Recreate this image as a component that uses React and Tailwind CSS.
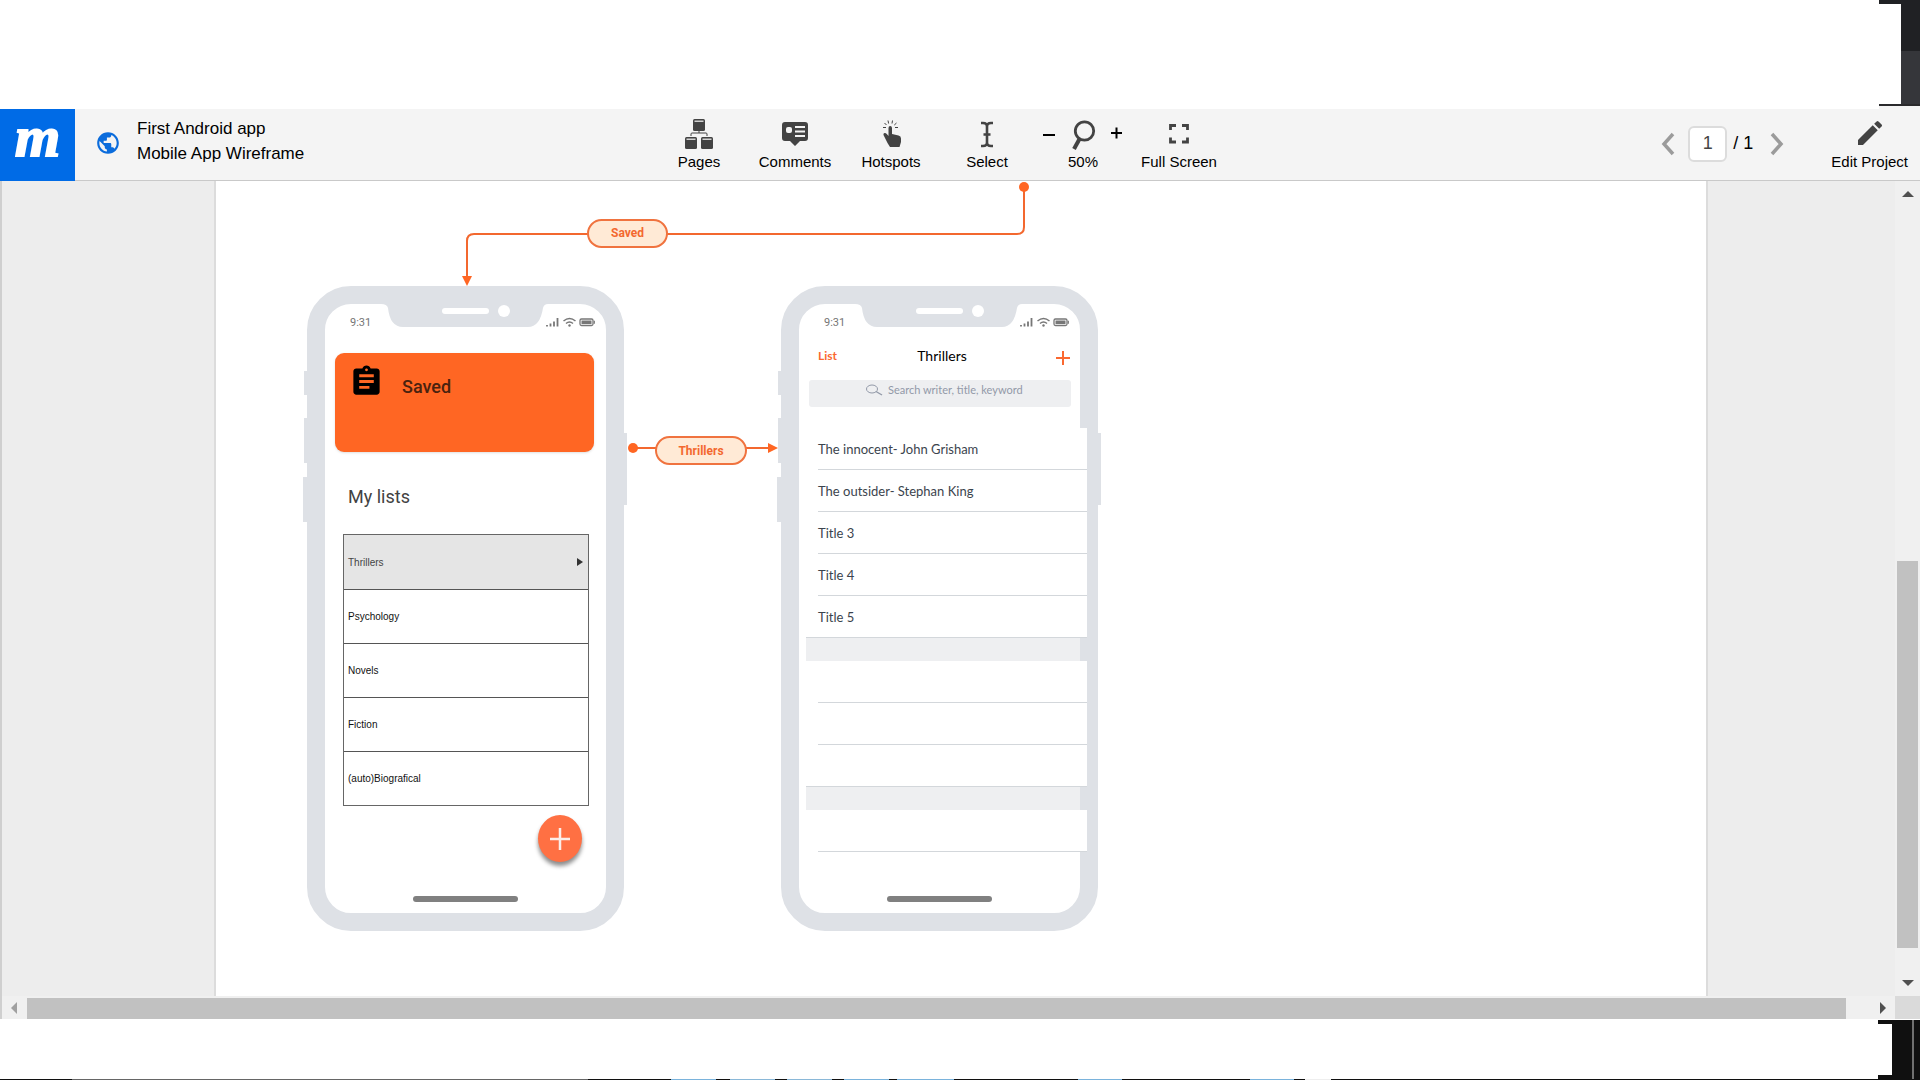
import React from "react";
import { MdAssignment, MdPublic, MdEdit } from "react-icons/md";

const INK = "#434343";

function PagesIcon() {
  const box = (x, y) => (
    <g>
      <rect x={x} y={y} width="12" height="12" rx="1.5" fill={INK} />
      <rect x={x + 1.5} y={y + 1.6} width="9" height="1.2" fill="#f4f4f4" />
    </g>
  );
  return (
    <svg width="30" height="32" viewBox="0 0 30 32" aria-hidden="true">
      {box(9, 1)}
      {box(1, 19)}
      {box(17, 19)}
      <path d="M7 18v-2q0-1 1-1h14q1 0 1 1v2M15 13v2" fill="none" stroke={INK} strokeWidth="1" />
    </svg>
  );
}

function CommentsIcon() {
  return (
    <svg width="28" height="32" viewBox="0 0 28 32" aria-hidden="true">
      <path d="M4 4h20a3 3 0 0 1 3 3v13a3 3 0 0 1-3 3h-5l-5 5-5-5H4a3 3 0 0 1-3-3V7a3 3 0 0 1 3-3z" fill={INK} />
      <rect x="5" y="9" width="6" height="6" rx="2" fill="#f4f4f4" />
      <path d="M14 9H24M14 13.500H24M14 18H24" stroke="#f4f4f4" strokeWidth="1.800" />
    </svg>
  );
}

function HotspotsIcon() {
  return (
    <svg width="28" height="32" viewBox="0 0 28 32" aria-hidden="true">
      <path
        d="M11.500 10q0-2 1.700-2t1.800 2v6l6.500 1.500q2.500.6 2.500 3v3.500L22.500 29h-9.500l-2.500-4-4-8q-.5-1.600 1-2 1.300-.2 2.500 1.200l1.500 1.800z"
        fill={INK}
      />
      <path d="M6 9.500h3M7.500 5l2 2M11 2.500l.6 3M15.500 2.500 15 5.500M19.500 5l-2.200 2M21 9.500h-3" stroke={INK} strokeWidth="1" />
    </svg>
  );
}

function SelectIcon() {
  return (
    <svg width="20" height="32" viewBox="0 0 20 32" aria-hidden="true">
      <path
        d="M4 5h2q4 0 4 3.500v16Q10 28 6 28H4M16 5h-2q-4 0-4 3.500M16 28h-2q-4 0-4-3.500M6.500 16.500h7"
        fill="none"
        stroke={INK}
        strokeWidth="2.600"
      />
    </svg>
  );
}

function ZoomIcon() {
  return (
    <svg width="28" height="34" viewBox="0 0 28 34" aria-hidden="true">
      <circle cx="15.500" cy="14" r="9.200" fill="none" stroke={INK} strokeWidth="2.800" />
      <path d="M10.500 22 5 32" stroke={INK} strokeWidth="4" />
    </svg>
  );
}

function FullScreenIcon() {
  return (
    <svg width="22" height="32" viewBox="0 0 22 32" aria-hidden="true">
      <path
        d="M2.500 12V7.500H8M14 7.500h5.500V12M19.500 19.500V24H14M8 24H2.500v-4.500"
        fill="none"
        stroke={INK}
        strokeWidth="2.800"
      />
    </svg>
  );
}

function Tool({ icon, label }) {
  return (
    <button type="button" className="flex flex-col items-center">
      <span className="flex h-9 items-center">{icon}</span>
      <span className="text-[15px] leading-5">{label}</span>
    </button>
  );
}

function Chevron({ points }) {
  return (
    <svg width="16" height="24" viewBox="0 0 16 24" aria-hidden="true">
      <polyline points={points} fill="none" stroke="#9b9b9b" strokeWidth="3.500" />
    </svg>
  );
}

function Header() {
  return (
    <header className="flex h-[72px] bg-[#f4f4f4] text-black">
      <a
        href="#home"
        aria-label="Home"
        className="flex w-[75px] items-center justify-center bg-[#006be6] pb-4 font-['Liberation_Serif',serif] text-[58px] leading-none font-bold text-white italic [-webkit-text-stroke:2px_white]"
      >
        m
      </a>
      <div className="flex flex-1 border-b border-[#c9c9c9]">
        <div className="flex flex-1 items-center pb-[3px]">
          <MdPublic className="ml-5 size-[26px] text-[#0b6cdc]" />
          <div className="ml-4 pb-1 text-[17px] leading-[25px] whitespace-nowrap">
            <h1>First Android app</h1>
            <p>Mobile App Wireframe</p>
          </div>
        </div>
        <nav className="mr-[105px] grid grid-cols-[repeat(6,96px)] pt-[7px]">
          <Tool icon={<PagesIcon />} label="Pages" />
          <Tool icon={<CommentsIcon />} label="Comments" />
          <Tool icon={<HotspotsIcon />} label="Hotspots" />
          <Tool icon={<SelectIcon />} label="Select" />
          <div className="flex flex-col items-center">
            <div className="flex h-9 items-center gap-3">
              <button type="button" aria-label="Zoom out" className="h-7 w-4">
                <svg width="16" height="16" viewBox="0 0 16 16">
                  <path d="M2 9h12" stroke="#000" strokeWidth="2" />
                </svg>
              </button>
              <ZoomIcon />
              <button type="button" aria-label="Zoom in" className="h-7 w-4">
                <svg width="16" height="16" viewBox="0 0 16 16">
                  <path d="M2 7h11M7.500 1.500v11" stroke="#000" strokeWidth="2" />
                </svg>
              </button>
            </div>
            <span className="text-[15px] leading-5">50%</span>
          </div>
          <Tool icon={<FullScreenIcon />} label="Full Screen" />
        </nav>
        <div className="flex flex-1 justify-end pr-3">
          <div className="flex items-center pb-[2px]">
            <button type="button" aria-label="Previous page">
              <Chevron points="13,2 4,12 13,22" />
            </button>
            <input
              aria-label="Page number"
              defaultValue="1"
              className="ml-3 h-9 w-[39px] rounded-md border-2 border-[#dcdcdc] bg-white text-center text-[18px] text-[#444]"
            />
            <span className="ml-[6px] text-[18px]">/ 1</span>
            <button type="button" aria-label="Next page" className="ml-4">
              <Chevron points="3,2 12,12 3,22" />
            </button>
          </div>
          <div className="ml-[46px] pt-[7px] whitespace-nowrap">
            <Tool icon={<MdEdit className="mb-[2px] size-8" color={INK} />} label="Edit Project" />
          </div>
        </div>
      </div>
    </header>
  );
}

function StatusBar() {
  return (
    <div className="relative h-10">
      <svg className="absolute top-0 left-0" width="281" height="25" viewBox="0 0 281 25" aria-hidden="true">
        <path d="M56 0q6 0 7 4 2 19 15 19h125q12 0 15-19 1-4 5-4z" fill="#dee1e6" />
        <rect x="117" y="4" width="47" height="6" rx="3" fill="#fff" />
        <circle cx="179" cy="7" r="6" fill="#fff" />
      </svg>
      <span className="absolute top-[11px] left-[25px] font-['Roboto',sans-serif] text-[11px] leading-4 text-[#757575]">
        9:31
      </span>
      <svg className="absolute top-[13px] left-[220px]" width="50" height="11" viewBox="0 0 50 11" aria-hidden="true">
        <path d="M2 8v1.500M5.500 6.500v3M9 4.500v5M12.500 1v8.500" stroke="#777" strokeWidth="1.800" />
        <path d="M18.500 4q6-5 12 0M21 6.500q3.500-3 7 0" fill="none" stroke="#777" strokeWidth="1.500" />
        <circle cx="24.500" cy="8.500" r="1.200" fill="#777" />
        <rect x="35" y="2" width="13" height="6.500" rx="1.500" fill="none" stroke="#777" strokeWidth="1.300" />
        <rect x="36.500" y="3.500" width="10" height="3.500" fill="#777" />
        <path d="M49.300 3.800v3" stroke="#777" strokeWidth="1.200" />
      </svg>
    </div>
  );
}

function Phone({ className, children }) {
  return (
    <section className={className}>
      <div className="absolute top-[85px] -left-[3px] h-6 w-2 bg-[#dee1e6]" />
      <div className="absolute top-[132px] -left-[3px] h-[45px] w-2 bg-[#dee1e6]" />
      <div className="absolute top-[191px] -left-[4px] h-[45px] w-2 bg-[#dee1e6]" />
      <div className="absolute top-[147px] -right-[3px] h-[72px] w-2 bg-[#dee1e6]" />
      <div className="relative flex h-[645px] w-[317px] flex-col rounded-[44px] border-[18px] border-[#dee1e6] bg-white">
        {children}
        <div className="mx-auto mt-auto mb-[11px] h-[6px] w-[105px] rounded-full bg-[#808080]" />
      </div>
    </section>
  );
}

const genres = ["Thrillers", "Psychology", "Novels", "Fiction", "(auto)Biografical"];

function SavedScreen() {
  return (
    <>
      <StatusBar />
      <div className="mt-[9px] mr-3 ml-[10px] flex h-[99px] rounded-[9px] bg-[#ff6623] shadow-sm">
        <MdAssignment className="mt-[11px] ml-[14px] size-[35px] text-black" />
        <h2 className="mt-[22px] ml-[18px] font-['Roboto',sans-serif] text-[18px] leading-6 font-medium text-[#4a220f]">
          Saved
        </h2>
      </div>
      <h3 className="mt-[33px] ml-[23px] font-['Roboto',sans-serif] text-[18px] leading-6 text-[#424242]">My lists</h3>
      <ul className="mt-[25px] mr-[17px] ml-[18px] border border-[#666] text-[10px] text-[#111]">
        {genres.map((name, i) => (
          <li
            key={name}
            className={
              i === 0
                ? "flex h-[54px] items-center justify-between bg-[#e5e5e5] px-1 text-[#444]"
                : "flex h-[54px] items-center border-t border-[#555] px-1"
            }
          >
            {name}
            {i === 0 && (
              <svg width="8" height="8" viewBox="0 0 8 8" aria-hidden="true">
                <path d="M1 0l6 4-6 4z" fill="#333" />
              </svg>
            )}
          </li>
        ))}
      </ul>
      <button
        type="button"
        aria-label="Add list"
        className="mt-[9px] mr-[24px] flex h-[47px] w-[44px] items-center justify-center self-end rounded-[50%] bg-[#ff7043] shadow-[0_4px_4px_rgba(0,0,0,0.45)]"
      >
        <svg width="20" height="22" viewBox="0 0 20 22">
          <path d="M0 11h20M10 0v22" stroke="#fbeee9" strokeWidth="2.500" />
        </svg>
      </button>
    </>
  );
}

const titles = ["The innocent- John Grisham", "The outsider- Stephan King", "Title 3", "Title 4", "Title 5"];

function Row({ text, full }) {
  return (
    <li className={full ? "h-[42px] border-b border-[#d3d7db] bg-white pl-3" : "h-[42px] bg-white pl-3"}>
      <div
        className={
          full ? "flex h-full items-center pt-[2px]" : "flex h-full items-center border-b border-[#d3d7db] pt-[2px]"
        }
      >
        {text}
      </div>
    </li>
  );
}

function ThrillersScreen() {
  return (
    <>
      <StatusBar />
      <div className="mt-[2px] mr-[10px] ml-[19px] grid grid-cols-[1fr_auto_1fr] items-center font-['Lato',sans-serif] leading-5">
        <a href="#list" className="text-[12px] font-bold text-[#fa6830]">
          List
        </a>
        <h2 className="pr-1 text-[14px] text-black">Thrillers</h2>
        <button type="button" aria-label="Add title" className="flex justify-self-end pt-1">
          <svg width="14" height="14" viewBox="0 0 14 14">
            <path d="M0 7h14M7 0v14" stroke="#fa6830" strokeWidth="2" />
          </svg>
        </button>
      </div>
      <label className="mt-[14px] mr-[9px] ml-[10px] flex h-[27px] items-start rounded-[3px] bg-[#eeeff1] pt-[2px] pl-[56px]">
        <svg className="mt-[2px] shrink-0" width="18" height="12" viewBox="0 0 18 12" aria-hidden="true">
          <ellipse cx="7" cy="5" rx="5.500" ry="4" fill="none" stroke="#9299a8" />
          <path d="M11 7.500l6 3.500" stroke="#9299a8" strokeWidth="1.400" />
        </svg>
        <input
          aria-label="Search writer, title, keyword"
          placeholder="Search writer, title, keyword"
          className="ml-[5px] h-4 w-full min-w-0 bg-transparent font-['Lato',sans-serif] text-[11px] placeholder:text-[#9299a8]"
        />
      </label>
      <ul className="mt-[21px] -mr-[7px] ml-[7px] font-['Lato',sans-serif] text-[13px] text-[#3b444d]">
        {titles.map((title, i) => (
          <Row key={title} text={title} full={i === 4} />
        ))}
        <li className="mr-[7px] h-[23px] bg-[#eeeff1]" />
        <Row />
        <Row />
        <Row full />
        <li className="mr-[7px] h-[23px] bg-[#eeeff1]" />
        <Row />
      </ul>
    </>
  );
}

function Connectors() {
  return (
    <svg className="absolute top-0 left-0" width="900" height="300" viewBox="0 0 900 300" aria-hidden="true">
      <g fill="none" stroke="#f3682f" strokeWidth="2">
        <path d="M808 6V46q0 7-7 7H258q-7 0-7 7V96" />
        <path d="M417 267H552" />
      </g>
      <g fill="#ff6623">
        <circle cx="808" cy="6" r="5" />
        <path d="M246 95h10l-5 10z" />
        <circle cx="417" cy="267" r="5" />
        <path d="M552 262l10 5-10 5z" />
      </g>
    </svg>
  );
}

function Artboard() {
  return (
    <div className="relative mr-[187px] ml-[212px] min-h-[815px] flex-1 border-x-2 border-[#dcdcdc] bg-white">
      <Phone className="absolute top-[105px] left-[91px]">
        <SavedScreen />
      </Phone>
      <Phone className="absolute top-[105px] left-[565px]">
        <ThrillersScreen />
      </Phone>
      <Connectors />
      <a
        href="#saved"
        className="absolute top-[38px] left-[371px] flex h-[29px] w-[81px] items-center justify-center rounded-full border-2 border-[#f0733f] bg-[#ffead6] pb-[2px] font-['Roboto',sans-serif] text-[12px] font-bold text-[#f3682f]"
      >
        Saved
      </a>
      <a
        href="#thrillers"
        className="absolute top-[255px] left-[439px] flex h-[29px] w-[92px] items-center justify-center rounded-full border-2 border-[#f0733f] bg-[#ffead6] font-['Roboto',sans-serif] text-[12px] font-bold text-[#f3682f]"
      >
        Thrillers
      </a>
    </div>
  );
}

function ScrollArrow({ label, d, fill }) {
  return (
    <button type="button" aria-label={label} className="flex size-[25px] shrink-0 items-center justify-center">
      <svg width="12" height="12" viewBox="0 0 12 12">
        <path d={d} fill={fill} />
      </svg>
    </button>
  );
}

function Workspace() {
  return (
    <main className="flex flex-1 flex-col">
      <div className="flex flex-1">
        <div className="flex flex-1 border-l-2 border-[#cfcfcf] bg-[#ededed]">
          <Artboard />
        </div>
        <div className="flex w-[25px] flex-col bg-[#f0f0f0]">
          <ScrollArrow label="Scroll up" d="M0 9l6-6 6 6z" fill="#505050" />
          <div className="flex-[355]" />
          <div className="mr-[2px] ml-[2px] flex-[387] bg-[#c1c1c1]" />
          <div className="flex-[23]" />
          <ScrollArrow label="Scroll down" d="M0 2l6 6 6-6z" fill="#505050" />
        </div>
      </div>
      <div className="flex h-[23px] items-center border-l-2 border-[#cfcfcf] bg-[#f0f0f0]">
        <ScrollArrow label="Scroll left" d="M8 0L2 6l6 6z" fill="#a0a0a0" />
        <div className="h-[21px] flex-1 self-end bg-[#c1c1c1]" />
        <div className="w-6" />
        <ScrollArrow label="Scroll right" d="M3 0l6 6-6 6z" fill="#505050" />
        <div className="h-full w-[25px] bg-[#dadada]" />
      </div>
    </main>
  );
}

function TopStrip() {
  return (
    <div className="flex h-[109px] justify-end bg-white">
      <div className="flex w-[41px] flex-col bg-[#f4f4f4]">
        <div className="h-1 bg-[#202124]" />
        <div className="flex h-[100px] bg-white pl-[22px]">
          <div className="flex flex-1 flex-col">
            <div className="h-[47px] bg-[#202124]" />
            <div className="flex-1 bg-[#35363a]" />
          </div>
        </div>
        <div className="h-[2px] bg-[#2a2a2c]" />
      </div>
    </div>
  );
}

function BottomStrip() {
  return (
    <div className="flex h-[61px] flex-col bg-white pt-px">
      <div className="flex flex-1 justify-end">
        <div className="flex w-[42px] bg-[#101010]">
          <div className="my-1 w-[14px] bg-white" />
          <div className="mr-[6px] ml-auto w-[2px] bg-[#707070]" />
        </div>
      </div>
      <div className="flex h-px bg-[#101010]">
        <div className="flex-[72]" />
        <div className="flex-[516] bg-[#666]" />
        <div className="flex-[83]" />
        <div className="flex-[45] bg-[#7ab3dc]" />
        <div className="flex-[14]" />
        <div className="flex-[45] bg-[#8ab8d8]" />
        <div className="flex-[12]" />
        <div className="flex-[45] bg-[#8ab8d8]" />
        <div className="flex-[12]" />
        <div className="flex-[45] bg-[#7ab3dc]" />
        <div className="flex-[8]" />
        <div className="flex-[57] bg-[#7ab3dc]" />
        <div className="flex-[124]" />
        <div className="flex-[44] bg-[#7ab3dc]" />
        <div className="flex-[128]" />
        <div className="flex-[44] bg-[#7ab3dc]" />
        <div className="flex-[11]" />
        <div className="flex-[26] bg-[#eee]" />
        <div className="flex-[589]" />
      </div>
    </div>
  );
}

export default function App() {
  return (
    <div className="flex min-h-screen flex-col bg-white font-['Liberation_Sans',Arial,sans-serif]">
      <TopStrip />
      <Header />
      <Workspace />
      <BottomStrip />
    </div>
  );
}
